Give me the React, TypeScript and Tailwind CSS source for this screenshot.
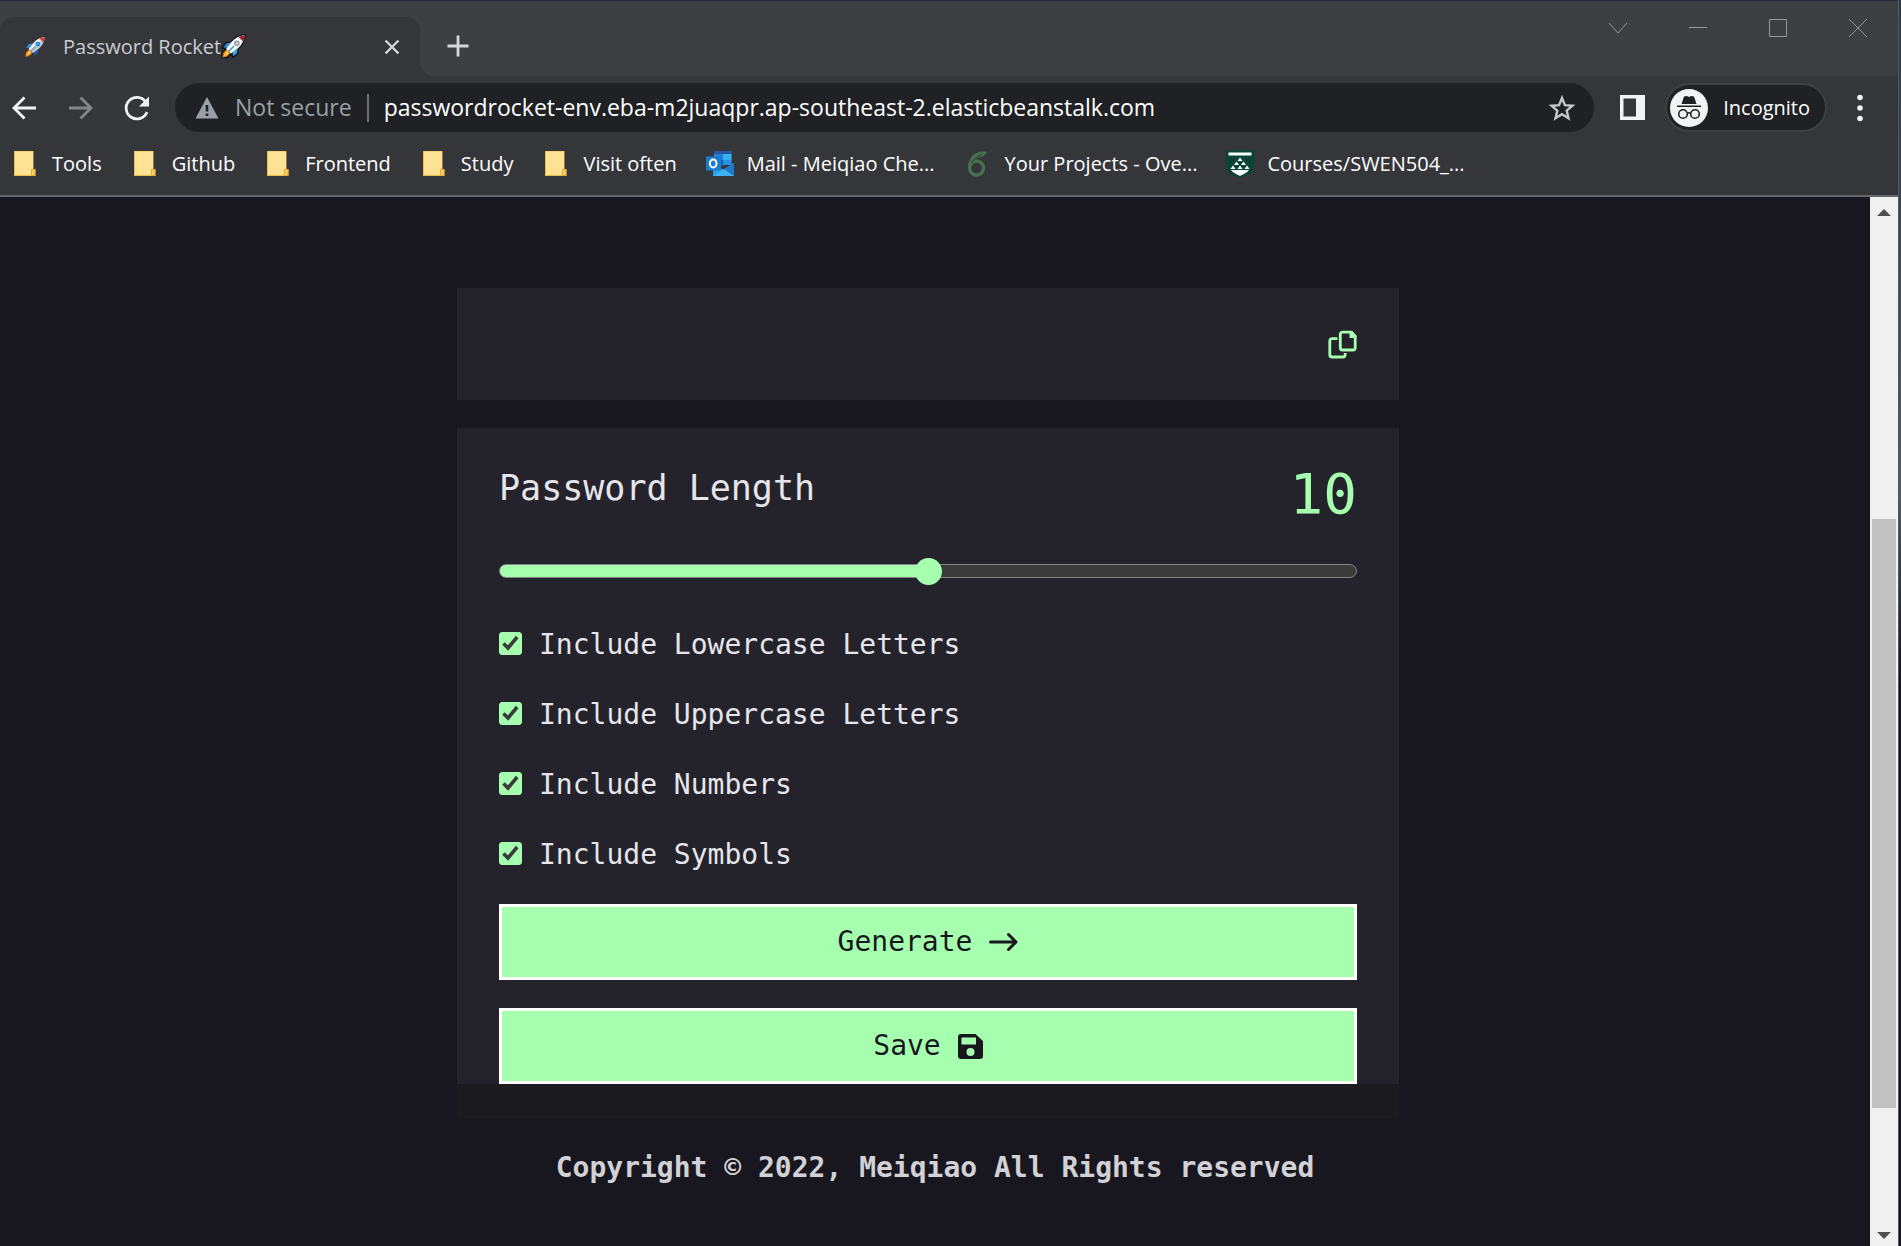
import React, { useState } from "react";

function RocketIcon({ outlined = false, className = "" }: { outlined?: boolean; className?: string }) {
  return (
    <svg viewBox="0 0 26 26" className={className} aria-hidden="true">
      {outlined && (
        <path
          d="M25 1 16 3.2 10.5 8.4 5 9.2 1.8 14.4 5 15.4 1 20.5 1.4 24.6 6 24.4 10.8 20.8 12.6 24 17 20.4 17.6 15.4 22.6 9.4Z"
          fill="#14151c"
          stroke="#14151c"
          strokeWidth="2"
          strokeLinejoin="round"
        />
      )}
      <path d="M10.5 8.6 5.4 9.8 2.6 14.2 7 14Z" fill="#2b8fe0" />
      <path d="M17.2 15.6 16.4 20.2 12.6 23.2 12 19Z" fill={outlined ? "#35a8ec" : "#2457b8"} />
      <path d="M6 15.6 2.4 19.6 1.4 24.4 6 23.6 9.6 20.4Z" fill="#e2791c" />
      <path d="M6.6 17 3.6 20.4 3 23 5.6 22.4 8.8 19.6Z" fill="#ffc93c" />
      <path d="M24.4 1.6C19 1.8 14.6 4.4 11 8.6L5.6 15.4 10.4 20.2 17.4 15C21.6 11.4 24.2 7 24.4 1.6Z" fill={outlined ? "#f6f8fa" : "#c3ccd6"} />
      <path d="M24.4 1.6C19 1.8 14.6 4.4 11 8.6L5.6 15.4 7.4 17.2Z" fill={outlined ? "#ffffff" : "#e6ebf0"} />
      <path d="M24.4 1.6C22 1.7 20 2.2 18.2 3L22.9 7.7C23.8 5.8 24.3 3.8 24.4 1.6Z" fill={outlined ? "#a3202a" : "#d8452c"} />
      <circle cx="16.4" cy="9.6" r="2.9" fill={outlined ? "#8d969f" : "#1e7fd0"} />
      <circle cx="16.4" cy="9.6" r="1.6" fill={outlined ? "#c9d0d6" : "#35b1f2"} />
      <path d="M13.6 12.4 8 18" stroke={outlined ? "#2d9ae0" : "#8693a0"} strokeWidth="1.4" />
    </svg>
  );
}

function FolderIcon() {
  return (
    <svg viewBox="0 0 28 28" className="size-7" aria-hidden="true">
      <path d="M3 1H22.500V19H24.500V26H3Z" fill="#e9bd4c" />
      <path d="M4 1.500H22V18.500L20 20V25H4Z" fill="#ffe394" />
      <path d="M20.500 19.500H24V25.500H20.500Z" fill="#f7cf62" stroke="#e0ac38" />
    </svg>
  );
}

function OutlookIcon() {
  return (
    <svg viewBox="0 0 28 28" className="size-7" aria-hidden="true">
      <path d="M8 1H25.500V15H8Z" fill="#1a5fb4" />
      <path d="M8 1H25.500V4H8Z" fill="#2456a6" />
      <path d="M8 4H17V10H8Z" fill="#1f7fd4" />
      <path d="M17 4H25.500V10H17Z" fill="#35b0ee" />
      <path d="M8 10H17V16H8Z" fill="#1560b0" />
      <path d="M17 10H25.500V15H17Z" fill="#2a93df" />
      <path d="M7 14.500 17.500 19.500 28 13V26H7Z" fill="#2aa0ea" />
      <path d="M28 13V26L14 18.500 17.500 19.500Z" fill="#1b79cc" />
      <path d="M7 26 17.500 19 28 26Z" fill="#3fb2f2" />
      <rect x="0" y="6.500" width="15" height="14" fill="#1a7ccf" />
      <ellipse cx="7.200" cy="13.500" rx="3.300" ry="3.900" fill="none" stroke="#fff" strokeWidth="2" />
    </svg>
  );
}

function OverleafIcon() {
  return (
    <svg viewBox="0 0 28 28" className="size-7" aria-hidden="true">
      <circle cx="12.500" cy="18" r="7" fill="none" stroke="#47704f" strokeWidth="3.400" />
      <path d="M23 2C17 .8 10 2.200 6.600 8.600 4.400 12.500 3.600 15 4 19L7.500 17C8.500 12 11 8.500 15 7.600 19 7 21 5.500 23 2Z" fill="#47704f" />
      <path d="M7.500 13C9.500 9.500 13 6.200 18 4.800" fill="none" stroke="#35363a" strokeWidth="1" />
    </svg>
  );
}

function ShieldIcon() {
  return (
    <svg viewBox="0 0 28 28" className="size-7" aria-hidden="true">
      <path d="M0 0H28V18C28 23 20 25.500 14 28 8 25.500 0 23 0 18Z" fill="#0b4434" />
      <path d="M2.500 2.500H25.500V5.500H2.500Z" fill="#fff" />
      <path
        d="M14 7.500 16.500 11H11.500ZM10.500 11.500 13 15H8ZM17.500 11.500 20 15H15ZM7 15.500 9.500 19H4.500ZM14 15.500 16.500 19H11.500ZM21 15.500 23.500 19H18.500Z"
        fill="#fff"
      />
      <path d="M5 20H23C21 23 17 24 14 26 11 24 7 23 5 20Z" fill="#fff" />
    </svg>
  );
}

const bookmarks: { label: string; icon: () => React.JSX.Element }[] = [
  { label: "Tools", icon: FolderIcon },
  { label: "Github", icon: FolderIcon },
  { label: "Frontend", icon: FolderIcon },
  { label: "Study", icon: FolderIcon },
  { label: "Visit often", icon: FolderIcon },
  { label: "Mail - Meiqiao Che...", icon: OutlookIcon },
  { label: "Your Projects - Ove...", icon: OverleafIcon },
  { label: "Courses/SWEN504_...", icon: ShieldIcon },
];

function TitleBar() {
  return (
    <div className="flex h-[75px]">
      <div className="w-[420px] bg-[#3c4043] pt-4">
        <div className="flex h-[59px] items-center rounded-t-[14px] bg-[#35363a] pr-[14px] pl-6">
          <RocketIcon className="size-[22px]" />
          <span className="ml-[17px] text-[20px] text-[#c8cbcf]">Password Rocket</span>
          <RocketIcon outlined className="size-[25px]" />
          <button aria-label="Close tab" className="ml-auto flex size-7 items-center justify-center text-[#d5d7da]">
            <svg viewBox="0 0 16 16" className="size-4" fill="none" stroke="currentColor" strokeWidth="2.400">
              <path d="M1.500 1.500 14.500 14.500M14.500 1.500 1.500 14.500" />
            </svg>
          </button>
        </div>
      </div>
      <div className="flex flex-1 justify-between rounded-bl-[14px] bg-[#3c4043] pr-[29px] pl-[27px]">
        <button aria-label="New tab" className="mt-[34px] size-[22px] text-[#d5d7da]">
          <svg viewBox="0 0 22 22" fill="none" stroke="currentColor" strokeWidth="2.800">
            <path d="M11 .5V21.500M.5 11H21.500" />
          </svg>
        </button>
        <div className="mt-4 flex h-[22px] gap-[58px] text-[#95989b]">
          <button aria-label="Search tabs" className="size-[22px]">
            <svg viewBox="0 0 22 22" fill="none" stroke="currentColor">
              <path d="M2 6 11 16 20 6" />
            </svg>
          </button>
          <button aria-label="Minimize" className="size-[22px]">
            <svg viewBox="0 0 22 22" fill="none" stroke="currentColor">
              <path d="M2 10.500H20" />
            </svg>
          </button>
          <button aria-label="Maximize" className="size-[22px]">
            <svg viewBox="0 0 22 22" fill="none" stroke="currentColor">
              <path d="M2.500 2.500H19.500V19.500H2.500Z" />
            </svg>
          </button>
          <button aria-label="Close" className="size-[22px]">
            <svg viewBox="0 0 22 22" fill="none" stroke="currentColor">
              <path d="M2 2 20 20M20 2 2 20" />
            </svg>
          </button>
        </div>
      </div>
    </div>
  );
}

function Toolbar() {
  return (
    <div className="flex items-center pt-[7px] pr-6 pl-[10px]">
      <button aria-label="Back" className="size-7 text-[#f1f3f4]">
        <svg viewBox="0 0 28 28" fill="none" stroke="currentColor" strokeWidth="2.800">
          <path d="M26 14H4.500M14.500 3.500 4 14 14.500 24.500" />
        </svg>
      </button>
      <button aria-label="Forward" className="ml-7 size-7 text-[#85868a]">
        <svg viewBox="0 0 28 28" fill="none" stroke="currentColor" strokeWidth="2.800">
          <path d="M3 14H24.500M14.500 3.500 25 14 14.500 24.500" />
        </svg>
      </button>
      <button aria-label="Reload" className="ml-7 size-7 text-[#f1f3f4]">
        <svg viewBox="0 0 28 28" fill="none" stroke="currentColor" strokeWidth="2.800">
          <path d="M25 18A10.800 10.800 0 1 1 23.500 7.500" />
          <path d="M27 2.500V12.500H17Z" fill="currentColor" stroke="none" />
        </svg>
      </button>
      <div className="ml-[25px] flex h-[49px] flex-1 items-center rounded-full bg-[#202124] pr-[18px] pl-5">
        <svg viewBox="0 0 24 24" className="size-6" aria-hidden="true">
          <path d="M12 1 23.500 22.500H.5Z" fill="#9aa0a6" />
          <path d="M10.700 9H13.300V15.500H10.700ZM10.700 17.500H13.300V20H10.700Z" fill="#202124" />
        </svg>
        <span className="ml-4 text-[23px] whitespace-nowrap text-[#9aa0a6]">Not secure</span>
        <span className="mx-[15px] h-7 w-0.5 bg-[#6b6e72]" />
        <input
          aria-label="Address"
          className="min-w-0 flex-1 bg-transparent text-[23px] text-white outline-none"
          defaultValue="passwordrocket-env.eba-m2juaqpr.ap-southeast-2.elasticbeanstalk.com"
        />
        <button aria-label="Bookmark this page" className="size-7 text-[#c4c7cb]">
          <svg viewBox="0 0 28 28" fill="none" stroke="currentColor" strokeWidth="2.400">
            <path d="M14 4 16.900 11.100 24.500 11.700 18.700 16.700 20.500 24.200 14 20.200 7.500 24.200 9.300 16.700 3.500 11.700 11.100 11.100Z" />
          </svg>
        </button>
      </div>
      <button aria-label="Side panel" className="ml-[26px] size-[25px] text-[#f1f3f4]">
        <svg viewBox="0 0 25 25">
          <path d="M0 0H25V25H0ZM3.500 3.500V21.500H16V3.500Z" fill="currentColor" fillRule="evenodd" />
        </svg>
      </button>
      <button className="ml-5 flex h-[49px] items-center rounded-full border-2 border-[#3f4144] bg-[#202124] pr-[15px] pl-[3px]">
        <svg viewBox="0 0 38 38" className="size-[38px]" aria-hidden="true">
          <circle cx="19" cy="19" r="19" fill="#f1f3f4" />
          <path d="M11.500 15 14 7.500 17 7 19 8 21 7 24 7.500 26.500 15Z" fill="#202124" />
          <path d="M7 16.500H31V18H7Z" fill="#202124" />
          <g fill="none" stroke="#202124" strokeWidth="1.600">
            <circle cx="13" cy="25" r="4.300" />
            <circle cx="25" cy="25" r="4.300" />
            <path d="M17.300 24.500C18.500 23.500 19.500 23.500 20.700 24.500" />
          </g>
        </svg>
        <span className="ml-[15px] text-[20px] text-white">Incognito</span>
      </button>
      <button aria-label="Menu" className="ml-[19px] h-7 w-7 text-[#f1f3f4]">
        <svg viewBox="0 0 28 28" fill="currentColor">
          <circle cx="14" cy="3.500" r="2.800" />
          <circle cx="14" cy="14" r="2.800" />
          <circle cx="14" cy="24.500" r="2.800" />
        </svg>
      </button>
    </div>
  );
}

function BookmarkBar() {
  return (
    <nav className="flex h-[65px] items-center gap-[29px] border-b-2 border-[#66676a] pl-[11px]">
      {bookmarks.map(({ label, icon: Icon }) => (
        <a key={label} href="#" className="flex items-center gap-[13px] text-[20px] whitespace-nowrap text-white">
          <Icon />
          {label}
        </a>
      ))}
    </nav>
  );
}

function Option({ label }: { label: string }) {
  const [checked, setChecked] = useState(true);
  return (
    <label className="flex h-[70px] items-center gap-[17px]">
      <span className="relative mb-1 size-[23px]">
        <input
          type="checkbox"
          checked={checked}
          onChange={(e) => setChecked(e.target.checked)}
          className="block size-[23px] appearance-none rounded-[3px] border border-[#858585] bg-[#3b3b3b] checked:border-[#a5ffaf] checked:bg-[#a5ffaf]"
        />
        {checked && (
          <svg viewBox="0 0 23 23" className="pointer-events-none absolute inset-0" aria-hidden="true">
            <path d="M4.500 11.500 9 16 18.200 5" fill="none" stroke="#3b3b3b" strokeWidth="3.600" />
          </svg>
        )}
      </span>
      {label}
    </label>
  );
}

function Generator() {
  const [length, setLength] = useState(10);
  const percent = (length / 20) * 100;
  return (
    <main className="mx-auto w-full max-w-[942px] font-['DejaVu_Sans_Mono',monospace] text-[28px] text-[#e6e5ea]">
      <section className="flex h-28 items-center bg-[#24232c] px-[42px]">
        <input aria-label="Generated password" readOnly className="min-w-0 flex-1 bg-transparent outline-none" />
        <button aria-label="Copy" className="size-[29px] text-[#a5ffaf]">
          <svg viewBox="0 0 29 29" fill="none" stroke="currentColor" strokeWidth="2.800">
            <path d="M9.500 8.700H4A2.200 2.200 0 0 0 1.800 10.900V24.800A2.200 2.200 0 0 0 4 27H15A2.200 2.200 0 0 0 17.200 24.800V23" />
            <path d="M23.500 2.200H14.500A2.200 2.200 0 0 0 12.300 4.400V17.800A2.200 2.200 0 0 0 14.500 20H25A2.200 2.200 0 0 0 27.200 17.800V6Z" />
            <path d="M21.500 1V8H28.400V6L23.500 1Z" fill="currentColor" stroke="none" />
          </svg>
        </button>
      </section>

      <section className="mt-7 bg-[#24232c] pt-7">
        <div className="px-[42px]">
          <div className="flex h-[74px] items-start justify-between">
            <label htmlFor="length" className="text-[35px] leading-[64px]">
              Password Length
            </label>
            <output htmlFor="length" className="text-[56px] leading-[76px] text-[#a5ffaf]">
              {length}
            </output>
          </div>
          <input
            id="length"
            type="range"
            min={0}
            max={20}
            value={length}
            onChange={(e) => setLength(Number(e.target.value))}
            style={{ "--fill": `${percent}%` } as React.CSSProperties}
            className="mt-[27px] block h-7 w-full appearance-none bg-transparent [&::-webkit-slider-runnable-track]:h-3.5 [&::-webkit-slider-runnable-track]:rounded-full [&::-webkit-slider-runnable-track]:border [&::-webkit-slider-runnable-track]:border-[#858585] [&::-webkit-slider-runnable-track]:bg-[linear-gradient(to_right,#a5ffaf_var(--fill),#3b3b3b_var(--fill))] [&::-webkit-slider-thumb]:-mt-[7px] [&::-webkit-slider-thumb]:size-[27px] [&::-webkit-slider-thumb]:appearance-none [&::-webkit-slider-thumb]:rounded-full [&::-webkit-slider-thumb]:bg-[#a5ffaf]"
          />
          <div className="mt-[25px]">
            <Option label="Include Lowercase Letters" />
            <Option label="Include Uppercase Letters" />
            <Option label="Include Numbers" />
            <Option label="Include Symbols" />
          </div>
          <button className="mt-3.5 flex h-[76px] w-full items-center justify-center gap-[17px] border-[3px] border-white bg-[#a5ffaf] text-[#18171f]">
            Generate
            <svg viewBox="0 0 29 29" className="size-[29px]" fill="none" stroke="currentColor" strokeWidth="3" strokeLinecap="round" strokeLinejoin="round">
              <path d="M1.500 14H27M19.500 6.500 27 14 19.500 21.500" />
            </svg>
          </button>
          <button className="mt-7 flex h-[76px] w-full items-center justify-center gap-[17px] border-[3px] border-white bg-[#a5ffaf] text-[#18171f]">
            Save
            <svg viewBox="0 0 25 25" className="size-[25px]" fill="currentColor">
              <path
                d="M3 0H17.500L25 7V22A3 3 0 0 1 22 25H3A3 3 0 0 1 0 22V3A3 3 0 0 1 3 0ZM3.500 3.500V10.500H18V3.500ZM12.500 14A4 4 0 1 0 12.500 22 4 4 0 1 0 12.500 14Z"
                fillRule="evenodd"
              />
            </svg>
          </button>
        </div>
        <div className="h-[35px] bg-[#1b1a1f]" />
      </section>

      <footer className="pt-[31px] pl-3.5 text-center leading-9 font-bold text-[#d2d1d6]">
        Copyright © 2022, Meiqiao All Rights reserved
      </footer>
    </main>
  );
}

function Scrollbar() {
  return (
    <div className="flex w-7 flex-col bg-[#f1f1f1] text-[#505050]">
      <svg viewBox="0 0 28 28" className="size-7 shrink-0" aria-hidden="true">
        <path d="M7 19 14 12 21 19Z" fill="currentColor" />
      </svg>
      <div className="grow-[294]" />
      <div className="mx-0.5 grow-[589] bg-[#c1c1c1]" />
      <div className="grow-[110]" />
      <svg viewBox="0 0 28 28" className="size-7 shrink-0" aria-hidden="true">
        <path d="M7 14 14 21 21 14Z" fill="currentColor" />
      </svg>
    </div>
  );
}

export default function App() {
  return (
    <div className="flex min-h-screen bg-[#18171f] font-['Open_Sans',sans-serif]">
      <div className="flex min-w-0 flex-1 flex-col">
        <header className="border-t border-[#232a38] bg-[#35363a]">
          <TitleBar />
          <Toolbar />
          <BookmarkBar />
        </header>
        <div className="flex flex-1">
          <div className="flex-1 pt-[91px] pr-3.5">
            <Generator />
          </div>
          <Scrollbar />
        </div>
      </div>
      <div className="w-[3px] border-l border-[#55585b] bg-linear-to-b from-[#2b3b48] via-[#4c5a63] via-40% to-[#10131d] to-55%" />
    </div>
  );
}
